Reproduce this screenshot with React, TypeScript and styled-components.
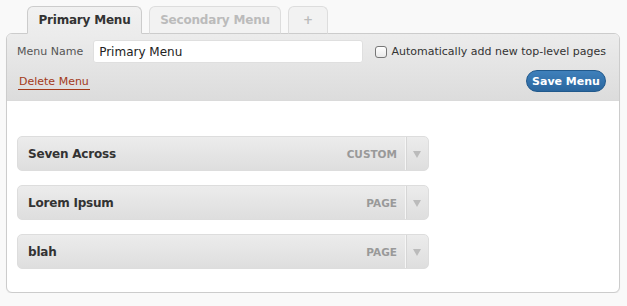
import styled, { createGlobalStyle } from "styled-components";

const GlobalStyle = createGlobalStyle`
  html, body {
    margin: 0;
    padding: 0;
    background: #f9f9f9;
    font-family: "DejaVu Sans", "Liberation Sans", sans-serif;
  }
`;

const Page = styled.div`
  padding: 6px 7px 0 6px;
`;

const Tabs = styled.div`
  display: flex;
  gap: 7px;
  padding-left: 21px;
  margin-bottom: -1px;
  position: relative;
  z-index: 1;
`;

const Tab = styled.div<{ $active?: boolean; $width: number }>`
  box-sizing: border-box;
  width: ${(p) => p.$width}px;
  height: 28px;
  display: flex;
  align-items: center;
  justify-content: center;
  border: 1px solid ${(p) => (p.$active ? "#cccccc" : "#dddddd")};
  border-bottom: ${(p) => (p.$active ? "1px solid #ececec" : "1px solid #cccccc")};
  border-radius: 6px 6px 0 0;
  background: ${(p) => (p.$active ? "linear-gradient(#f1f1f1, #ececec)" : "#f2f2f2")};
  color: ${(p) => (p.$active ? "#333333" : "#bbbbbb")};
  font-size: 12px;
  font-weight: bold;
  letter-spacing: -0.2px;
`;

const Panel = styled.div`
  border: 1px solid #cccccc;
  border-radius: 6px;
  overflow: hidden;
  background: #ffffff;
  box-shadow: 0 1px 1px rgba(0, 0, 0, 0.06);
`;

const Header = styled.div`
  box-sizing: border-box;
  height: 67px;
  padding: 6px 13px 0 10px;
  background: linear-gradient(#ececec, #dcdcdc);
  border-bottom: 1px solid #dadada;
  display: flex;
  flex-direction: column;
  gap: 7px;
`;

const Row = styled.div<{ $top?: boolean }>`
  display: flex;
  align-items: ${(p) => (p.$top ? "flex-start" : "center")};
  justify-content: space-between;
`;

const Group = styled.div`
  display: flex;
  align-items: center;
`;

const Label = styled.span`
  font-size: 11px;
  color: #555555;
  margin-right: 10px;
`;

const NameInput = styled.input`
  box-sizing: border-box;
  width: 270px;
  height: 23px;
  border: 1px solid #dfdfdf;
  border-radius: 3px;
  padding: 0 5px;
  font-family: inherit;
  font-size: 12px;
  color: #222222;
  background: #ffffff;
  outline: none;
`;

const Check = styled.span`
  box-sizing: border-box;
  width: 12px;
  height: 12px;
  border: 1px solid #777777;
  border-radius: 3px;
  background: linear-gradient(#ffffff, #e9e9e9);
  margin-right: 4px;
`;

const CheckText = styled.span`
  font-size: 11px;
  color: #333333;
`;

const DeleteLink = styled.a`
  font-size: 11px;
  color: #a33a1a;
  text-decoration: none;
  border-bottom: 1px solid #a33a1a;
  padding: 0 1px 1px;
  margin-left: 1px;
  margin-top: 5px;
`;

const SaveButton = styled.button`
  box-sizing: border-box;
  width: 80px;
  height: 22px;
  border: 1px solid #21598c;
  border-radius: 11px;
  background: linear-gradient(#3f80bb, #2a669e);
  color: #ffffff;
  font-family: inherit;
  font-size: 11px;
  font-weight: bold;
  padding: 0;
`;

const Body = styled.div`
  padding: 35px 10px 23px 10px;
  display: flex;
  flex-direction: column;
  gap: 14px;
`;

const Item = styled.div`
  box-sizing: border-box;
  width: 412px;
  height: 35px;
  display: flex;
  align-items: center;
  border: 1px solid #dddddd;
  border-radius: 5px;
  background: linear-gradient(#ececec, #dedede);
`;

const Title = styled.span`
  flex: 1;
  padding-left: 10px;
  font-size: 12px;
  font-weight: bold;
  color: #333333;
  letter-spacing: -0.2px;
`;

const Type = styled.span`
  font-size: 10.5px;
  font-weight: bold;
  color: #999999;
  padding-right: 8px;
`;

const Toggle = styled.span`
  align-self: stretch;
  width: 22px;
  display: flex;
  align-items: center;
  justify-content: center;
  border-left: 1px solid #f6f6f6;
  box-shadow: inset 1px 0 0 #d6d6d6;
`;

const Arrow = styled.span`
  width: 0;
  height: 0;
  border-left: 4px solid transparent;
  border-right: 4px solid transparent;
  border-top: 7px solid #bbbbbb;
  margin-top: 2px;
`;

const items = [
  { title: "Seven Across", type: "CUSTOM" },
  { title: "Lorem Ipsum", type: "PAGE" },
  { title: "blah", type: "PAGE" },
];

export default function App() {
  return (
    <Page>
      <GlobalStyle />
      <Tabs>
        <Tab $active $width={115}>Primary Menu</Tab>
        <Tab $width={132}>Secondary Menu</Tab>
        <Tab $width={40}>+</Tab>
      </Tabs>
      <Panel>
        <Header>
          <Row>
            <Group>
              <Label>Menu Name</Label>
              <NameInput defaultValue="Primary Menu" />
            </Group>
            <Group>
              <Check />
              <CheckText>Automatically add new top-level pages</CheckText>
            </Group>
          </Row>
          <Row $top>
            <DeleteLink href="#">Delete Menu</DeleteLink>
            <SaveButton>Save Menu</SaveButton>
          </Row>
        </Header>
        <Body>
          {items.map((item) => (
            <Item key={item.title}>
              <Title>{item.title}</Title>
              <Type>{item.type}</Type>
              <Toggle>
                <Arrow />
              </Toggle>
            </Item>
          ))}
        </Body>
      </Panel>
    </Page>
  );
}
